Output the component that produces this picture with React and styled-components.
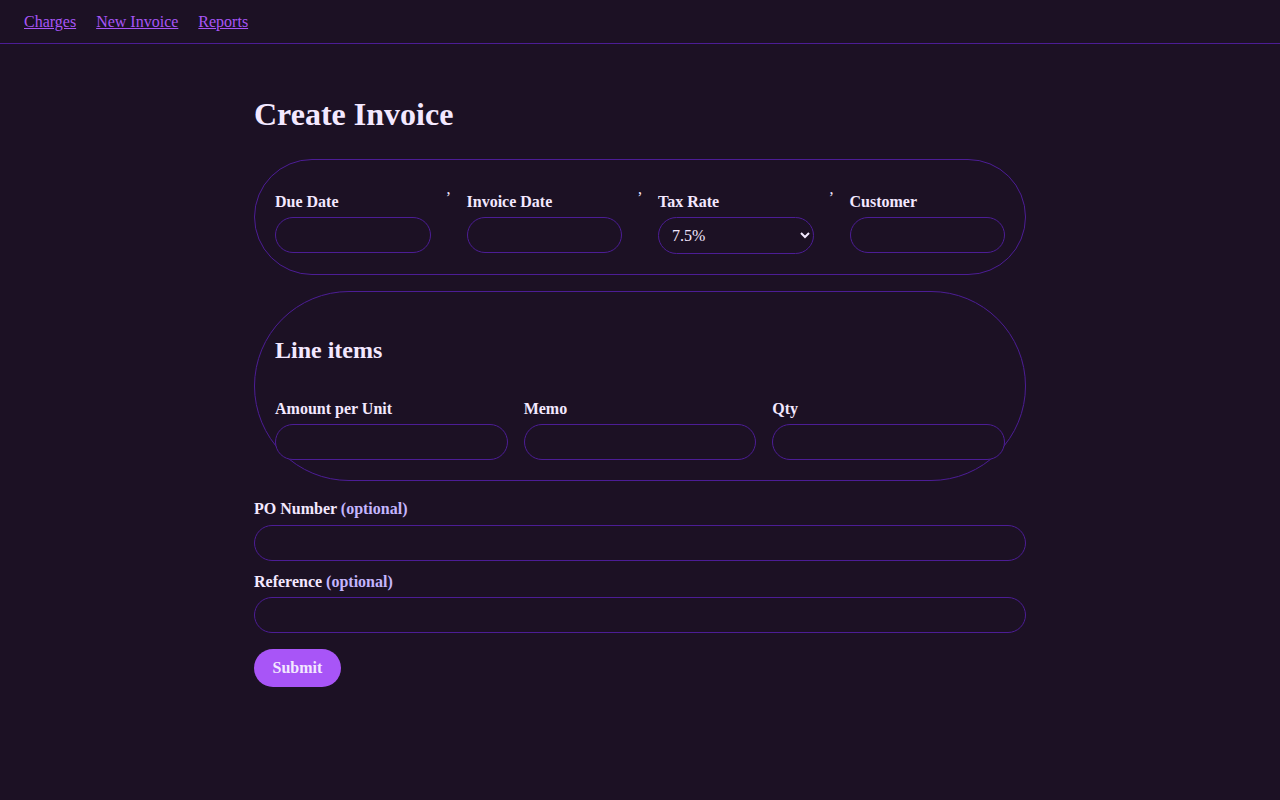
import styled, { createGlobalStyle } from 'styled-components';

const GlobalStyle = createGlobalStyle`
  html, body {
    margin: 0;
    padding: 0;
    background: #1c1124;
  }
  body {
    font-family: "Liberation Serif", "Times New Roman", serif;
    font-size: 16px;
    color: #f3e8ff;
  }
`;

const topFields = [
  { label: 'Due Date' },
  { label: 'Invoice Date' },
  { label: 'Tax Rate', select: true },
  { label: 'Customer' },
];

const lineFields = ['Amount per Unit', 'Memo', 'Qty'];

function App() {
  return (
    <Page>
      <GlobalStyle />
      <Nav>
        <NavLink href="#">Charges</NavLink>
        <NavLink href="#">New Invoice</NavLink>
        <NavLink href="#">Reports</NavLink>
      </Nav>
      <Main>
        <Title>Create Invoice</Title>
        <Form onSubmit={(e) => e.preventDefault()}>
          <Card>
            <FieldRow>
              {topFields.map((f, i) => [
                i > 0 && <Comma key={`c${i}`}>,</Comma>,
                <Field key={f.label}>
                  <Label>{f.label}</Label>
                  {f.select ? (
                    <Select defaultValue="7.5">
                      <option value="7.5">7.5%</option>
                    </Select>
                  ) : (
                    <Input type="text" />
                  )}
                </Field>,
              ])}
            </FieldRow>
          </Card>
          <Card>
            <SectionTitle>Line items</SectionTitle>
            <LineGrid>
              {lineFields.map((label) => (
                <Field key={label}>
                  <Label>{label}</Label>
                  <Input type="text" />
                </Field>
              ))}
            </LineGrid>
          </Card>
          <Group $top={18}>
            <Label $gap={7}>
              PO Number <Optional>(optional)</Optional>
            </Label>
            <Input type="text" />
          </Group>
          <Group $top={11}>
            <Label $gap={6}>
              Reference <Optional>(optional)</Optional>
            </Label>
            <Input type="text" />
          </Group>
          <Submit type="submit">Submit</Submit>
        </Form>
      </Main>
    </Page>
  );
}

const Page = styled.div`
  min-height: 800px;
`;

const Nav = styled.nav`
  display: flex;
  gap: 20px;
  height: 43px;
  align-items: center;
  padding: 0 24px;
  border-bottom: 1px solid #4c1d95;
`;

const NavLink = styled.a`
  color: #a855f7;
  text-decoration: underline;
  font-size: 16px;
  line-height: 18px;
`;

const Main = styled.main`
  width: 772px;
  margin: 0 auto;
  padding-top: 52px;
`;

const Title = styled.h1`
  margin: 0 0 26px;
  font-size: 32px;
  line-height: 37px;
  font-weight: 700;
  color: #f3e8ff;
`;

const Form = styled.form`
  display: flex;
  flex-direction: column;
`;

const Card = styled.section`
  border: 1px solid #4c1d95;
  border-radius: 9999px;
  padding: 20px;
  & + & {
    margin-top: 16px;
  }
`;

const FieldRow = styled.div`
  display: flex;
  gap: 16px;
  align-items: flex-start;
`;

const Comma = styled.span`
  width: 4px;
  line-height: 18px;
  font-size: 16px;
  color: #f3e8ff;
`;

const Field = styled.div`
  flex: 1;
  min-width: 0;
  display: flex;
  flex-direction: column;
  padding-top: 12px;
`;

const Label = styled.label`
  display: block;
  font-weight: 700;
  font-size: 16px;
  line-height: 19px;
  margin-bottom: ${(p) => p.$gap ?? 6}px;
  color: #f3e8ff;
`;

const Optional = styled.span`
  color: #c4b5fd;
`;

const Input = styled.input`
  box-sizing: border-box;
  width: 100%;
  height: 36px;
  padding: 0 14px;
  border: 1px solid #4c1d95;
  border-radius: 9999px;
  background: #1c1124;
  color: #f3e8ff;
  font-family: "Liberation Serif", serif;
  font-size: 16px;
  outline: none;
`;

const Select = styled.select`
  box-sizing: border-box;
  width: 100%;
  height: 37px;
  padding: 0 6px 0 9px;
  border: 1px solid #4c1d95;
  border-radius: 9999px;
  background: #1c1124;
  color: #f3e8ff;
  font-family: "Liberation Serif", "Times New Roman", serif;
  font-size: 16px;
  outline: none;
`;

const SectionTitle = styled.h2`
  margin: 24px 0 23px;
  font-size: 24px;
  line-height: 28px;
  font-weight: 700;
  color: #f3e8ff;
`;

const LineGrid = styled.div`
  display: grid;
  grid-template-columns: repeat(3, 1fr);
  gap: 16px;
`;

const Group = styled.div`
  margin-top: ${(p) => p.$top}px;
`;

const Submit = styled.button`
  align-self: flex-start;
  margin-top: 16px;
  height: 38px;
  padding: 0 18.5px;
  border: none;
  border-radius: 9999px;
  background: #a855f7;
  color: #f3e8ff;
  font-family: "Liberation Serif", serif;
  font-size: 16px;
  font-weight: 700;
  cursor: pointer;
`;

export default App;
